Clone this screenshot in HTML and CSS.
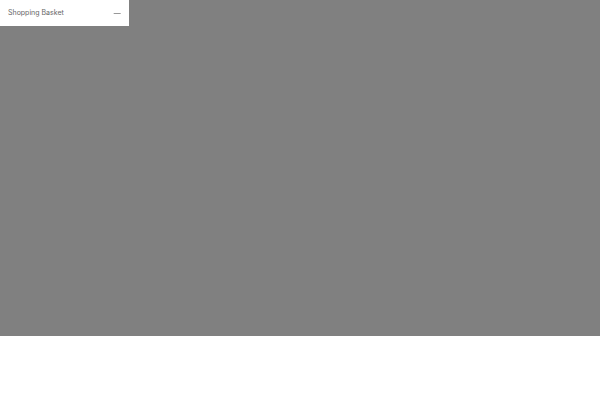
FILE: index.html
```html
<!DOCTYPE html>
<html lang="en">
<head>
<meta charset="utf-8">
<meta name="viewport" content="width=device-width, initial-scale=1">
<title>Shopping Basket</title>
<link rel="stylesheet" href="styles.css">
</head>
<body>
<main class="backdrop">
  <section class="basket">
    <h1 class="basket-title">Shopping Basket</h1>
    <button class="basket-close" type="button" aria-label="Close basket">
      <svg class="basket-icon" viewBox="0 0 8 8" aria-hidden="true"><path d="M.7 4.5H7.7" stroke="#999" stroke-width="1"/></svg>
    </button>
  </section>
</main>
</body>
</html>
```
FILE: styles.css
```css
body {
  margin: 0;
  background: #fff;
  font-family: Inter, "Open Sans", sans-serif;
}

.backdrop {
  display: flex;
  align-items: flex-start;
  min-height: 84vh;
  background: #808080;
}

.basket {
  display: flex;
  align-items: center;
  justify-content: space-between;
  box-sizing: border-box;
  min-width: 129px;
  padding: 8px;
  background: #fff;
}

.basket-title {
  margin: 0;
  color: #666;
  font-size: 7px;
  font-weight: 400;
  line-height: 10px;
}

.basket-close {
  display: flex;
  padding: 0;
  border: 0;
  background: none;
  cursor: pointer;
}

.basket-icon {
  width: 8px;
  height: 8px;
}
```
